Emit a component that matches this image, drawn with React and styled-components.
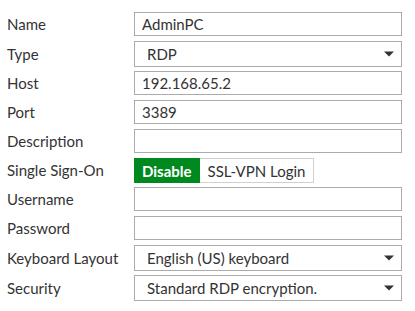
import React from 'react'
import styled, { createGlobalStyle } from 'styled-components'

const GlobalStyle = createGlobalStyle`
    body {
        margin: 0;
        background: #fff;
        font-family: Lato, "Open Sans", sans-serif;
        color: #333;
    }
`

const Form = styled.div`
    display: flex;
    flex-direction: column;
    padding: 12px 0 0 7px;
    width: 395px;
`

const Row = styled.div`
    display: flex;
    align-items: flex-start;
`

const Label = styled.div`
    width: 127px;
    flex-shrink: 0;
    font-size: 15px;
    line-height: ${props => props.tall ? '26px' : '24px'};
    color: #333;
`

const TextInput = styled.input`
    box-sizing: border-box;
    width: 268px;
    height: 24px;
    margin: 0 0 5px 0;
    padding: 0 7px;
    border: 1px solid #ababab;
    border-radius: 0;
    font-family: Lato, "Open Sans", sans-serif;
    font-size: 15px;
    color: #333;
    outline: none;
`

const Select = styled.div`
    box-sizing: border-box;
    width: 268px;
    height: 26px;
    margin-bottom: 4px;
    padding: 0 7px 0 12px;
    border: 1px solid #ababab;
    display: flex;
    align-items: center;
    justify-content: space-between;
    font-size: 15px;
    color: #333;
`

const Toggle = styled.div`
    display: flex;
    height: 25px;
    margin-bottom: 4px;
`

const ToggleButton = styled.div`
    box-sizing: border-box;
    height: 25px;
    padding: 0 ${props => props.active ? '7px' : '8px'};
    display: flex;
    align-items: center;
    font-size: 15px;
    font-weight: ${props => props.active ? 700 : 400};
    background: ${props => props.active ? '#00891e' : '#fff'};
    color: ${props => props.active ? '#fff' : '#333'};
    border: 1px solid ${props => props.active ? '#00891e' : '#d0d0d0'};
    border-left: ${props => props.active ? undefined : 'none'};
`

const Caret = () => (
    <svg width="10" height="6" viewBox="0 0 10 6">
        <path d="M0 0.5 H10 L5 5.5 Z" fill="#333" />
    </svg>
)

const fields = [
    { label: 'Name', value: 'AdminPC' },
    { label: 'Type', select: 'RDP' },
    { label: 'Host', value: '192.168.65.2' },
    { label: 'Port', value: '3389' },
    { label: 'Description', value: '' },
    { label: 'Single Sign-On', toggle: true },
    { label: 'Username', value: '' },
    { label: 'Password', value: '', type: 'password' },
    { label: 'Keyboard Layout', select: 'English (US) keyboard' },
    { label: 'Security', select: 'Standard RDP encryption.' },
]

export default function App() {
    return (
        <>
            <GlobalStyle />
            <Form>
                {fields.map(f => (
                    <Row key={f.label}>
                        <Label tall={!!f.select}>{f.label}</Label>
                        {f.select ? (
                            <Select>
                                <span>{f.select}</span>
                                <Caret />
                            </Select>
                        ) : f.toggle ? (
                            <Toggle>
                                <ToggleButton active>Disable</ToggleButton>
                                <ToggleButton>SSL-VPN Login</ToggleButton>
                            </Toggle>
                        ) : (
                            <TextInput type={f.type || 'text'} defaultValue={f.value} />
                        )}
                    </Row>
                ))}
            </Form>
        </>
    )
}
